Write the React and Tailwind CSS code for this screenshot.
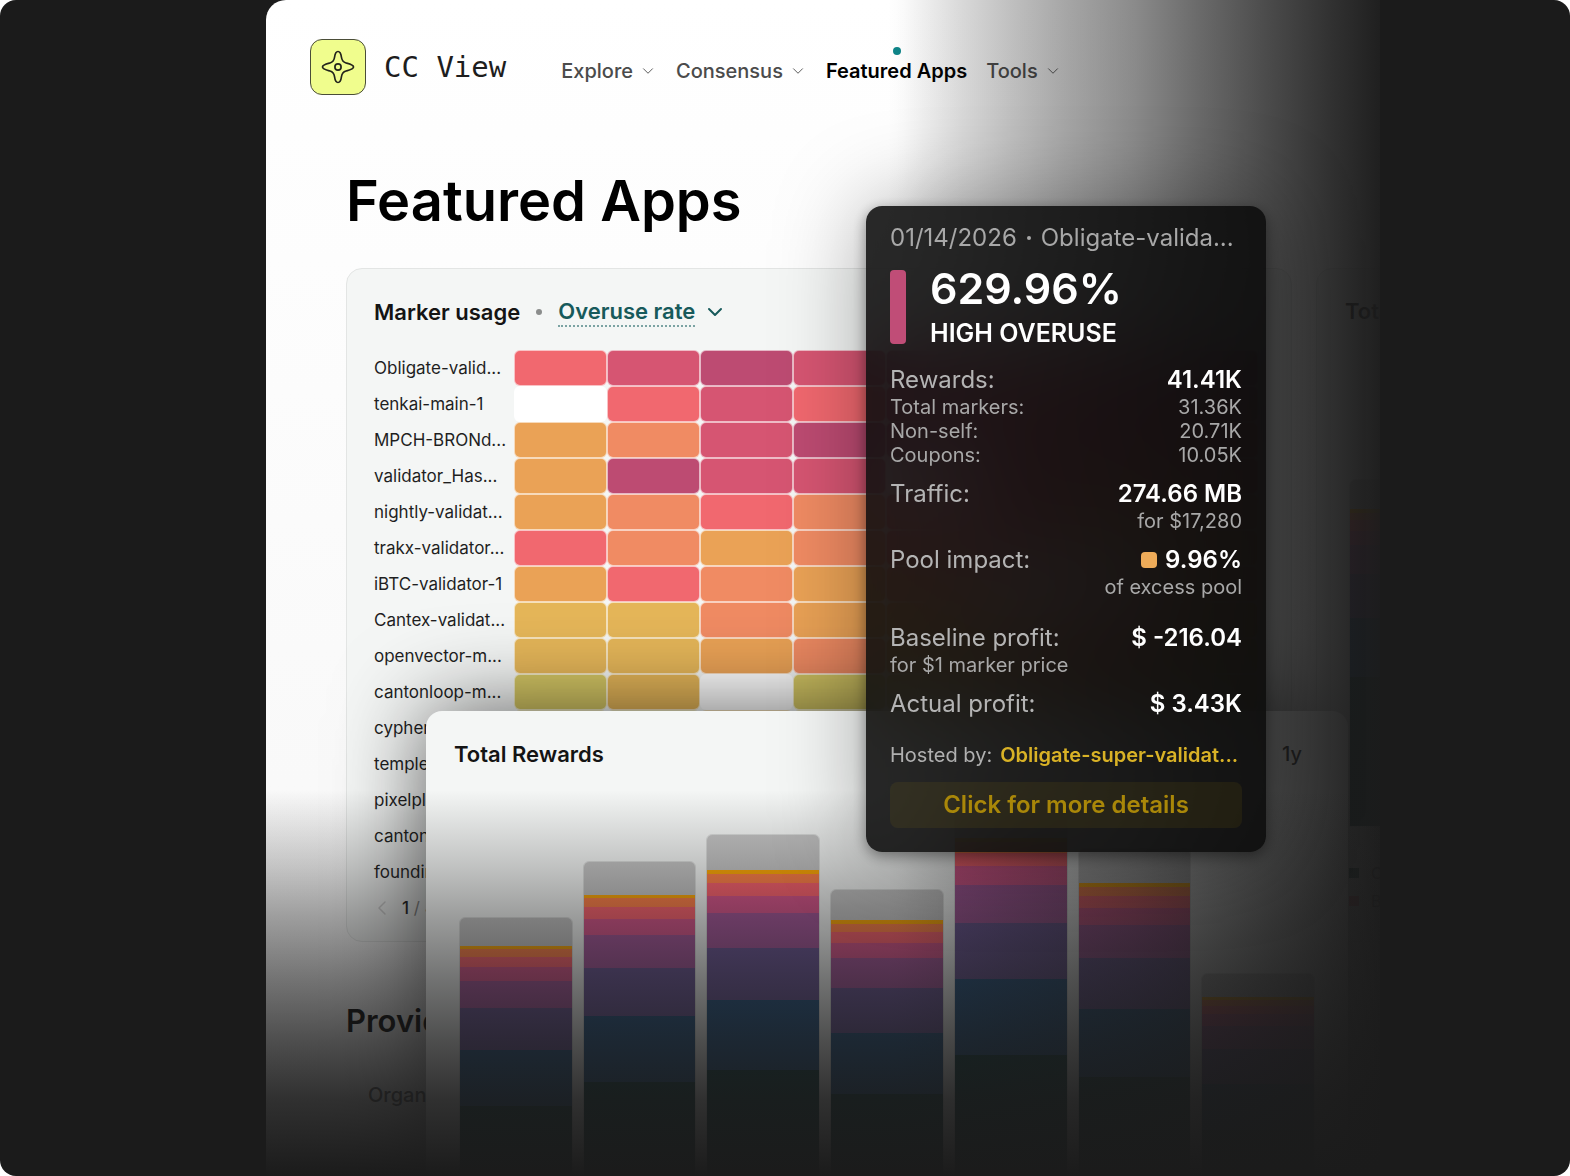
import React, { useState } from 'react';
import { ChevronDown, ChevronLeft } from 'lucide-react';

const tones = {
  coral: 'bg-[#f1686f]',
  rose: 'bg-[#d65572]',
  plum: 'bg-[#bd4b72]',
  amber: 'bg-[#eaa256]',
  orange: 'bg-[#f08b63]',
  gold: 'bg-[#e5b659]',
  olive: 'bg-[#d6c865]',
  none: 'bg-white',
};

const markerRows = [
  { name: 'Obligate-valid...', cells: ['coral', 'rose', 'plum', 'rose', 'plum', 'rose', 'rose', 'plum'] },
  { name: 'tenkai-main-1', cells: ['none', 'coral', 'rose', 'coral', 'rose', 'coral', 'rose', 'rose'] },
  { name: 'MPCH-BRONd...', cells: ['amber', 'orange', 'rose', 'plum', 'plum', 'rose', 'rose', 'coral'] },
  { name: 'validator_Has...', cells: ['amber', 'plum', 'rose', 'rose', 'none', 'rose', 'coral', 'coral'] },
  { name: 'nightly-validat...', cells: ['amber', 'orange', 'coral', 'orange', 'coral', 'coral', 'amber', 'orange'] },
  { name: 'trakx-validator...', cells: ['coral', 'orange', 'amber', 'orange', 'coral', 'coral', 'orange', 'amber'] },
  { name: 'iBTC-validator-1', cells: ['amber', 'coral', 'orange', 'amber', 'orange', 'none', 'none', 'orange'] },
  { name: 'Cantex-validat...', cells: ['gold', 'gold', 'orange', 'amber', 'amber', 'orange', 'coral', 'amber'] },
  { name: 'openvector-m...', cells: ['gold', 'gold', 'amber', 'orange', 'amber', 'orange', 'orange', 'gold'] },
  { name: 'cantonloop-m...', cells: ['olive', 'gold', 'none', 'olive', 'olive', 'gold', 'amber', 'gold'] },
  { name: 'cypher-valida...', cells: ['olive', 'olive', 'gold', 'olive', 'olive', 'gold', 'gold', 'olive'] },
  { name: 'temple-validat...', cells: ['olive', 'olive', 'olive', 'gold', 'olive', 'olive', 'olive', 'olive'] },
  { name: 'pixelplex-main...', cells: ['olive', 'olive', 'olive', 'olive', 'olive', 'olive', 'olive', 'olive'] },
  { name: 'cantonswap-1', cells: ['olive', 'olive', 'olive', 'olive', 'olive', 'olive', 'olive', 'olive'] },
  { name: 'founding-vali...', cells: ['olive', 'olive', 'olive', 'olive', 'olive', 'olive', 'olive', 'olive'] },
];

// share of every reward bucket in a bar, top to bottom
const buckets = [
  { tone: 'bg-[#c4c4c4]', share: 8.4 },
  { tone: 'bg-[#ffa600]', share: 1 },
  { tone: 'bg-[#ff7c43]', share: 2.3 },
  { tone: 'bg-[#f95d6a]', share: 3 },
  { tone: 'bg-[#d45087]', share: 4.2 },
  { tone: 'bg-[#a05195]', share: 8.4 },
  { tone: 'bg-[#665191]', share: 12.6 },
  { tone: 'bg-[#205080]', share: 17 },
  { tone: 'bg-[#06383a]', share: 43.1 },
];

const rewardBars = [333, 389, 416, 361, 451, 402, 277];

const navItems = [
  { label: 'Explore', menu: true },
  { label: 'Consensus', menu: true },
  { label: 'Featured Apps', active: true },
  { label: 'Tools', menu: true },
];

function Logo() {
  return (
    <a href="#" className="flex items-center gap-[18px]">
      <span className="flex h-14 w-14 items-center justify-center rounded-xl border border-[#4a4d38] bg-[#f0fd8d]">
        <svg width="34" height="34" viewBox="0 0 34 34" fill="none" stroke="#23241c" strokeWidth="1.7" strokeLinejoin="round">
          <path d="M17 1.5C19.5 1.500 20 4 20.400 7C20.800 10 22 12.200 25 13C28 13.800 32.500 14.800 32.500 17C32.500 19.200 28 20.200 25 21C22 21.800 20.800 24 20.400 27C20 30 19.500 32.500 17 32.500C14.500 32.500 14 30 13.600 27C13.200 24 12 21.800 9 21C6 20.200 1.500 19.200 1.500 17C1.500 14.800 6 13.800 9 13C12 12.200 13.200 10 13.600 7C14 4 14.500 1.500 17 1.500Z" />
          <circle cx="17" cy="17" r="3.1" />
        </svg>
      </span>
      <span className="font-['DejaVu_Sans_Mono',monospace] text-[29px] leading-9 text-[#1d1d1d]">CC View</span>
    </a>
  );
}

function Header() {
  return (
    <header className="flex items-center gap-[55px] px-11 pt-[39px]">
      <Logo />
      <nav className="flex items-center gap-[19px] pt-2 text-[20px] leading-7 font-medium">
        {navItems.map((item) => (
          <a key={item.label} href="#" className={`relative flex items-center gap-1.5 whitespace-nowrap ${item.active ? 'font-semibold text-black' : 'text-[#4b4b4b]'}`}>
            {item.label}
            {item.menu && <ChevronDown size={18} strokeWidth={1.2} />}
            {item.active && <span className="absolute -top-2.5 left-1/2 h-2 w-2 -translate-x-1/2 rounded-full bg-[#0d8488]" />}
          </a>
        ))}
      </nav>
    </header>
  );
}

function MarkerCard() {
  const [page] = useState(1);

  return (
    <section className="w-[946px] shrink-0 rounded-2xl border border-[#e3e5e4] bg-[#f4f6f5] px-[27px] pt-7">
      <div className="flex items-center gap-4 text-[22px] leading-7">
        <h2 className="font-semibold text-[#141414]">Marker usage</h2>
        <span className="h-1.5 w-1.5 rounded-full bg-[#8b8d8c]" />
        <label className="flex items-center gap-2 text-[#175a5b]">
          <select aria-label="Metric" className="appearance-none border-b-2 border-dotted border-[#7ba3a3] bg-transparent font-semibold outline-none">
            <option>Overuse rate</option>
          </select>
          <ChevronDown size={24} strokeWidth={2} />
        </label>
      </div>
      <div className="mt-[23px]">
        {markerRows.map((row) => (
          <div key={row.name} className="flex h-9 items-center">
            <span className="w-[140px] shrink-0 text-[17px] leading-6 whitespace-nowrap text-[#1f1f1f]">{row.name}</span>
            {row.cells.map((cell, i) => (
              <span key={i} className={`h-9 w-[93px] shrink-0 rounded-md border border-white/60 ${tones[cell]}`} />
            ))}
          </div>
        ))}
      </div>
      <div className="flex h-[51px] items-start gap-2 pt-1 text-[17px] leading-7 text-[#8b8b8b]">
        <button aria-label="Previous page" className="-ml-1 flex h-7 items-center text-[#cfcfcf]"><ChevronLeft size={24} strokeWidth={1.5} /></button>
        <span><span className="font-medium text-[#1f1f1f]">{page}</span> / 4</span>
      </div>
    </section>
  );
}

function TotalsCard() {
  return (
    <section className="w-[600px] shrink-0 rounded-2xl border border-[#e3e5e4] bg-[#f4f6f5] px-7 pt-7">
      <h2 className="text-[22px] leading-7 font-semibold text-[#141414]">Total markers</h2>
      <div className="mt-[154px] ml-1 w-[112px]">
        <Bar height={348} />
      </div>
      <ul className="mt-8 ml-1 text-[16px] leading-7 text-[#1f1f1f]">
        <li className="flex items-center gap-3"><span className="h-2.5 w-2.5 bg-[#06433c]" />Canton</li>
        <li className="flex items-center gap-3"><span className="h-2.5 w-2.5 bg-[#f95d6a]" />Brale</li>
      </ul>
    </section>
  );
}

function Bar({ height }) {
  return (
    <div className="flex min-w-0 flex-1 flex-col overflow-hidden rounded-t-md border border-black/10" style={{ height }}>
      {buckets.map((bucket) => (
        <div key={bucket.tone} className={bucket.tone} style={{ height: `${bucket.share}%` }} />
      ))}
    </div>
  );
}

function RewardsCard() {
  return (
    <section className="absolute top-[711px] right-8 left-40 rounded-t-2xl bg-[#f4f6f5] px-[33px] pt-[29px] shadow-[0_0_90px_rgba(0,0,0,0.65)]">
      <div className="-mx-[5px] flex items-center justify-between leading-7">
        <h2 className="text-[22px] font-semibold text-[#141414]">Total Rewards</h2>
        <button className="px-[18px] text-[20px] font-medium text-[#1f1f1f]">1y</button>
      </div>
      <div className="mt-[31px] flex h-[451px] items-end gap-2.5">
        {rewardBars.map((height, i) => <Bar key={i} height={height} />)}
      </div>
    </section>
  );
}

function Line({ label, value, children }) {
  return (
    <div className="flex justify-between text-[24px] leading-[30px]">
      <span className="text-[#b4b4b4]">{label}</span>
      <span className="flex items-center gap-2 font-semibold text-white">{children}{value}</span>
    </div>
  );
}

function SubLine({ label, value }) {
  return (
    <div className="flex justify-between text-[20px] leading-6 text-[#a8a8a8]">
      <span>{label}</span>
      <span>{value}</span>
    </div>
  );
}

function Tooltip() {
  return (
    <div role="tooltip" className="absolute top-[206px] left-[600px] w-[400px] rounded-2xl bg-[#0a0a0a]/88 px-6 pt-4 pb-6 shadow-[0_0_90px_rgba(0,0,0,0.35),0_4px_14px_rgba(0,0,0,0.4)] backdrop-blur-2xl">
      <p className="flex items-center gap-2.5 text-[24px] leading-8 whitespace-nowrap text-[#a8a8a8]">
        01/14/2026 <span className="h-1 w-1 rounded-full bg-[#a8a8a8]" /> Obligate-valida...
      </p>
      <div className="mt-4 flex items-start gap-6">
        <span className="h-[74px] w-4 rounded bg-[#c04d77]" />
        <div className="flex flex-col gap-3 font-semibold text-white">
          <span className="text-[43px] leading-9">629.96%</span>
          <span className="text-[25px] leading-[30px]">HIGH OVERUSE</span>
        </div>
      </div>
      <div className="mt-[17px]">
        <Line label="Rewards:" value="41.41K" />
        <SubLine label="Total markers:" value="31.36K" />
        <SubLine label="Non-self:" value="20.71K" />
        <SubLine label="Coupons:" value="10.05K" />
      </div>
      <div className="mt-3">
        <Line label="Traffic:" value="274.66 MB" />
        <SubLine value="for $17,280" />
      </div>
      <div className="mt-3">
        <Line label="Pool impact:" value="9.96%">
          <span className="h-4 w-4 rounded bg-[#eeab59]" />
        </Line>
        <SubLine value="of excess pool" />
      </div>
      <div className="mt-6">
        <Line label="Baseline profit:" value="$ -216.04" />
        <SubLine label="for $1 marker price" />
      </div>
      <div className="mt-3">
        <Line label="Actual profit:" value="$ 3.43K" />
      </div>
      <p className="mt-6 flex gap-2 text-[20px] leading-6 whitespace-nowrap text-[#b0b0b0]">
        Hosted by: <a href="#" className="font-semibold text-[#d9b226]">Obligate-super-validat...</a>
      </p>
      <button className="mt-[15px] h-[46px] w-full rounded-lg bg-[#ffcc00]/6 text-[24px] leading-[30px] font-semibold text-[#a98709]">Click for more details</button>
    </div>
  );
}

export default function App() {
  return (
    <div className="relative min-h-screen overflow-hidden rounded-2xl bg-[#1b1b1b] font-[Inter,sans-serif]">
      <div className="relative mr-[190px] ml-[266px]">
        <main className="relative min-h-screen overflow-hidden rounded-tl-[20px] bg-linear-to-b from-white to-[#f6f6f6]">
          <Header />
          <div className="pt-[71px] pl-20">
            <h1 className="text-[56px] leading-[70px] font-semibold text-black">Featured Apps</h1>
            <div className="mt-8 flex gap-6">
              <MarkerCard />
              <TotalsCard />
            </div>
            <h2 className="mt-[59px] text-[31px] leading-10 font-semibold text-black">Providers</h2>
            <p className="mt-10 pl-[22px] text-[20px] leading-7 font-medium text-[#4b4b4b]">Organisation</p>
          </div>
          <RewardsCard />
          <div className="pointer-events-none absolute inset-y-0 right-0 w-[492px] bg-[linear-gradient(to_right,rgb(27_27_27/0)_0%,rgb(27_27_27/0.02)_3%,rgb(27_27_27/0.17)_15%,rgb(27_27_27/0.28)_25%,rgb(27_27_27/0.39)_36%,rgb(27_27_27/0.51)_50%,rgb(27_27_27/0.65)_63%,rgb(27_27_27/0.79)_77%,rgb(27_27_27/0.9)_90%,rgb(27_27_27/0.98)_100%)]" />
          <div className="pointer-events-none absolute inset-x-0 bottom-0 h-[386px] bg-[linear-gradient(to_bottom,rgb(27_27_27/0)_0%,rgb(27_27_27/0.24)_20%,rgb(27_27_27/0.41)_33%,rgb(27_27_27/0.6)_49%,rgb(27_27_27/0.77)_65%,rgb(27_27_27/0.9)_80%,rgb(27_27_27/1)_100%)]" />
        </main>
        <Tooltip />
      </div>
    </div>
  );
}
